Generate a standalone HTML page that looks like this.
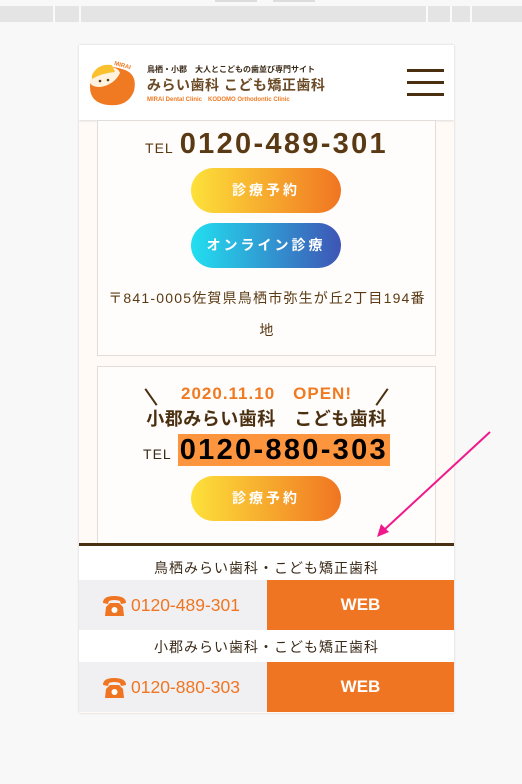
<!DOCTYPE html>
<html><head><meta charset="utf-8"><style>
*{margin:0;padding:0;box-sizing:border-box}
body{width:522px;height:784px;background:#f8f8f8;position:relative;overflow:hidden;font-family:"Liberation Sans","Noto Sans CJK JP",sans-serif;color:#5a3a14}
.a{position:absolute}
.bar{left:0;top:6px;width:522px;height:16px;background:#e4e4e4}
.sep{top:6px;width:2px;height:16px;background:#fafafa}
.page{left:79px;top:45px;width:375px;height:668px;background:#fffaf5;box-shadow:0 0 2px #ccc;overflow:hidden}
.hdr{left:0;top:0;width:375px;height:75px;background:#fff;box-shadow:0 1px 2px #ddd}
.card{left:18px;width:339px;background:#fffdfb;border:1px solid #e2ddd8}
.btn{position:absolute;left:93px;width:150px;height:45px;border-radius:23px;color:#fff;font-weight:bold;font-size:14px;letter-spacing:3px;text-align:center;line-height:45px}
.tel{position:absolute;width:100%;text-align:center;white-space:nowrap}
.tel small{font-size:14px;letter-spacing:1px;margin-right:6px}
.tel b{font-size:29px;letter-spacing:2.3px}
.lbl{left:0;width:375px;text-align:center;font-size:14px;color:#3a2a18;letter-spacing:1px;background:#fff}
.row{left:0;width:375px;height:50px}
.row .l{position:absolute;left:0;top:0;width:188px;height:50px;background:#f0f0f2;color:#f07522;font-size:17.5px;line-height:50px;padding-left:52px}
.row .r{position:absolute;left:188px;top:0;width:187px;height:50px;background:#f07522;color:#fff;font-weight:bold;font-size:17px;text-align:center;line-height:50px}
.ham{left:328px;width:37px;height:3px;background:#4a2f10}
</style></head><body>
<div class="a" style="left:215px;top:0;width:42px;height:2px;background:#ddd"></div>
<div class="a" style="left:273px;top:0;width:42px;height:2px;background:#ddd"></div>
<div class="a bar"></div>
<div class="a sep" style="left:53px"></div><div class="a sep" style="left:79px"></div>
<div class="a sep" style="left:426px"></div><div class="a sep" style="left:450px"></div><div class="a sep" style="left:470px"></div>

<div class="a page">
 <div class="a hdr">
  <svg class="a" style="left:9px;top:12px" width="52" height="52" viewBox="0 0 52 52">
   <path d="M6 18 Q16 6 34 12 Q50 16 46 34 Q40 50 20 48 Q2 46 2 30 Q2 22 6 18Z" fill="#f07a22"/>
   <path d="M2 24 Q4 10 20 10 Q30 10 32 16 Q26 28 12 30 Q2 30 2 24Z" fill="#fff3e0"/>
   <path d="M4 18 Q10 6 24 8 L27 15 Q14 16 4 22Z" fill="#fbc02d"/>
   <circle cx="12" cy="24" r="1.3" fill="#5a3a14"/><circle cx="20" cy="23" r="1.3" fill="#5a3a14"/>
   <text x="26" y="9" font-size="6" fill="#f07a22" font-family="Liberation Sans" font-weight="bold" transform="rotate(15 30 8)">MIRAI</text>
  </svg>
  <div class="a" style="left:68px;top:19px;font-size:8px;font-weight:bold;color:#3a2a18;white-space:nowrap">鳥栖・小郡　大人とこどもの歯並び専門サイト</div>
  <div class="a" style="left:68px;top:30px;font-size:14px;color:#6b4a25;white-space:nowrap;letter-spacing:0.5px;font-weight:bold">みらい歯科 こども矯正歯科</div>
  <div class="a" style="left:68px;top:49px;font-size:6px;color:#f07a22;white-space:nowrap;font-weight:bold">MIRAI Dental Clinic　KODOMO Orthodontic Clinic</div>
  <div class="a ham" style="top:24px"></div><div class="a ham" style="top:36px"></div><div class="a ham" style="top:48px"></div>
 </div>
 <div class="a card" style="top:75px;height:236px">
  <div class="tel" style="top:7px;color:#5a3a14"><small>TEL</small><b>0120-489-301</b></div>
  <div class="btn" style="top:47px;background:linear-gradient(90deg,#fde13a,#f07522)">診療予約</div>
  <div class="btn" style="top:102px;background:linear-gradient(90deg,#22dff0,#3e55b5)">オンライン診療</div>
  <div class="a" style="left:10px;top:161px;width:318px;text-align:center;font-size:14px;line-height:32px;letter-spacing:1.2px;color:#5a3a14">〒841-0005佐賀県鳥栖市弥生が丘2丁目194番地</div>
 </div>
 <div class="a card" style="top:321px;height:200px">
  <div class="tel" style="top:12px;color:#f07a22;font-size:17px;font-weight:bold;letter-spacing:1px">2020.11.10　OPEN!</div>
  <div class="a" style="left:52px;top:20px;width:2px;height:20px;background:#4a2f10;transform:rotate(-35deg)"></div>
  <div class="a" style="left:283px;top:20px;width:2px;height:20px;background:#4a2f10;transform:rotate(35deg)"></div>
  <div class="tel" style="top:38px;font-size:18px;font-weight:bold;color:#4a2f10;letter-spacing:0.5px">小郡みらい歯科　こども歯科</div>
  <div class="tel" style="top:67px;color:#000"><small style="color:#3a2a18">TEL</small><b style="background:#fd943e;padding:0 2px">0120-880-303</b></div>
  <div class="btn" style="top:109px;background:linear-gradient(90deg,#fde13a,#f07522)">診療予約</div>
 </div>
 <div class="a" style="left:0;top:498px;width:375px;height:3px;background:#4a2f10"></div>
 <div class="a lbl" style="top:501px;height:34px;line-height:44px">鳥栖みらい歯科・こども矯正歯科</div>
 <div class="a row" style="top:535px"><div class="l">0120-489-301</div><div class="r">WEB</div>
  <svg class="a" style="left:22px;top:14px" width="27" height="24" viewBox="0 0 27 24"><path d="M2 9 Q2 2 13 2 Q25 2 25 9 L20 10 L19 7 Q13 5 8 7 L7 10Z" fill="#f07522"/><path d="M5 13 L9 9 L18 9 L22 13 L23 22 L4 22Z" fill="#f07522"/><circle cx="13.5" cy="16" r="3" fill="#fff"/></svg></div>
 <div class="a lbl" style="top:585px;height:32px;line-height:34px">小郡みらい歯科・こども矯正歯科</div>
 <div class="a row" style="top:617px"><div class="l">0120-880-303</div><div class="r">WEB</div>
  <svg class="a" style="left:22px;top:14px" width="27" height="24" viewBox="0 0 27 24"><path d="M2 9 Q2 2 13 2 Q25 2 25 9 L20 10 L19 7 Q13 5 8 7 L7 10Z" fill="#f07522"/><path d="M5 13 L9 9 L18 9 L22 13 L23 22 L4 22Z" fill="#f07522"/><circle cx="13.5" cy="16" r="3" fill="#fff"/></svg></div>
</div>
<svg class="a" style="left:0;top:0" width="522" height="784"><line x1="490" y1="432" x2="384" y2="530" stroke="#f0198c" stroke-width="2"/><path d="M377 537 L381 524 L389 532Z" fill="#f0198c"/></svg>
</body></html>
